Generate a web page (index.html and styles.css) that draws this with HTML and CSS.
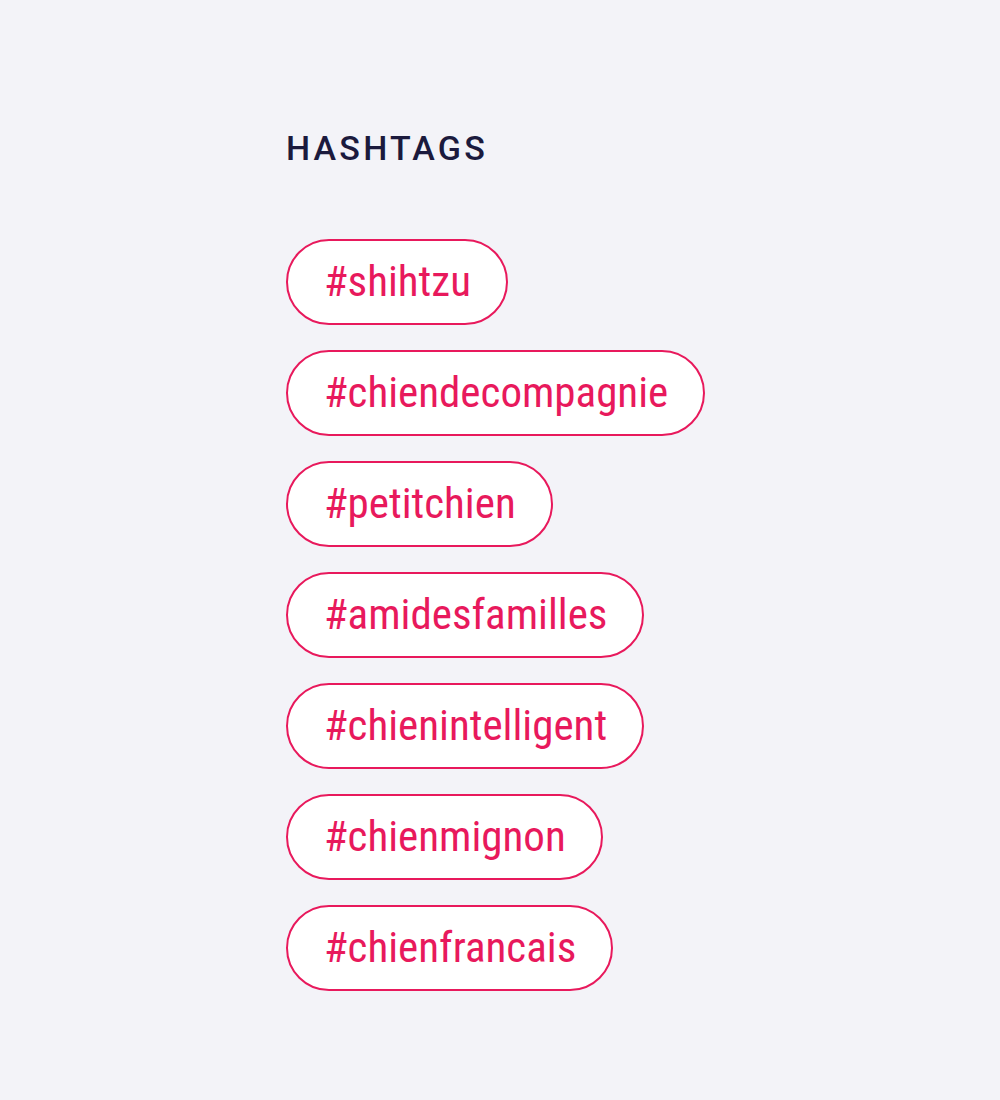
FILE: index.html
```html
<!DOCTYPE html>
<html>
<head>
<meta charset="utf-8">
<link rel="stylesheet" href="styles.css">
</head>
<body>
<section class="tags">
  <h2 class="title">HASHTAGS</h2>
  <ul class="list">
    <li class="pill">#shihtzu</li>
    <li class="pill">#chiendecompagnie</li>
    <li class="pill">#petitchien</li>
    <li class="pill">#amidesfamilles</li>
    <li class="pill">#chienintelligent</li>
    <li class="pill">#chienmignon</li>
    <li class="pill">#chienfrancais</li>
  </ul>
</section>
</body>
</html>
```
FILE: styles.css
```css
html, body {
  margin: 0;
  padding: 0;
  background: #f3f3f8;
}
body {
  font-family: "Roboto Condensed", Roboto, "Liberation Sans", sans-serif;
  font-stretch: condensed;
  width: 1000px;
  height: 1100px;
}
.tags {
  padding: 128px 0 0 286px;
}
.title {
  margin: 0;
  font-family: Roboto, "Liberation Sans", sans-serif;
  font-stretch: normal;
  font-weight: 500;
  font-size: 34px;
  line-height: 40px;
  letter-spacing: 3.2px;
  color: #1b1a3d;
}
.list {
  list-style: none;
  margin: 71px 0 0 0;
  padding: 0;
  display: flex;
  flex-direction: column;
  align-items: flex-start;
  gap: 25px;
}
.pill {
  box-sizing: border-box;
  height: 86px;
  padding: 0 35px 2px 36px;
  display: flex;
  align-items: center;
  background: #fff;
  border: 2px solid #e8195c;
  border-radius: 43px;
  color: #e8195c;
  font-size: 43px;
}
```
